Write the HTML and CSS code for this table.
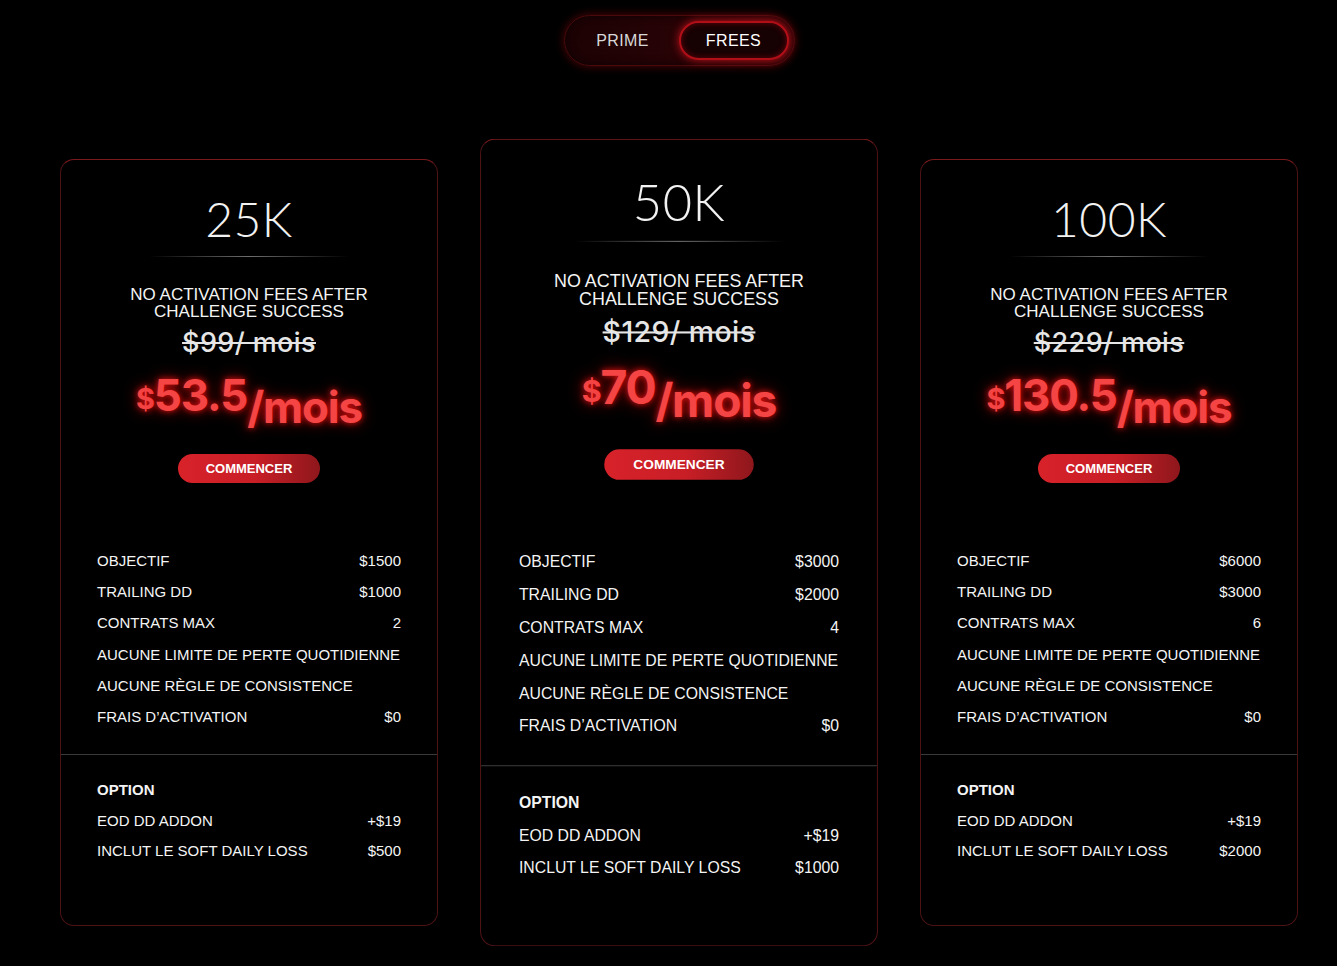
FILE: index.html
```html
<!DOCTYPE html>
<html lang="fr">
<head>
<meta charset="utf-8">
<title>Plans</title>
<link rel="stylesheet" href="styles.css">
</head>
<body>
<main class="page">
  <div class="toggle-wrap">
    <div class="toggle">
      <button class="tab">PRIME</button>
      <button class="tab active">FREES</button>
    </div>
  </div>

  <section class="cards">
    <article class="card">
      <div class="head">
        <h2 class="size">25K</h2>
        <div class="rule"></div>
        <p class="subtitle">NO ACTIVATION FEES AFTER<br>CHALLENGE SUCCESS</p>
        <p class="old">$99/ mois</p>
        <p class="price"><span class="cur">$</span><span class="amt">53.5</span><span class="per">/mois</span></p>
        <button class="cta">COMMENCER</button>
      </div>
      <ul class="features">
        <li><span>OBJECTIF</span><span>$1500</span></li>
        <li><span>TRAILING DD</span><span>$1000</span></li>
        <li><span>CONTRATS MAX</span><span>2</span></li>
        <li><span>AUCUNE LIMITE DE PERTE QUOTIDIENNE</span></li>
        <li><span>AUCUNE RÈGLE DE CONSISTENCE</span></li>
        <li><span>FRAIS D’ACTIVATION</span><span>$0</span></li>
      </ul>
      <ul class="options">
        <li class="opt-title">OPTION</li>
        <li><span>EOD DD ADDON</span><span>+$19</span></li>
        <li><span>INCLUT LE SOFT DAILY LOSS</span><span>$500</span></li>
      </ul>
    </article>

    <article class="card featured">
      <div class="head">
        <h2 class="size">50K</h2>
        <div class="rule"></div>
        <p class="subtitle">NO ACTIVATION FEES AFTER<br>CHALLENGE SUCCESS</p>
        <p class="old">$129/ mois</p>
        <p class="price"><span class="cur">$</span><span class="amt">70</span><span class="per">/mois</span></p>
        <button class="cta">COMMENCER</button>
      </div>
      <ul class="features">
        <li><span>OBJECTIF</span><span>$3000</span></li>
        <li><span>TRAILING DD</span><span>$2000</span></li>
        <li><span>CONTRATS MAX</span><span>4</span></li>
        <li><span>AUCUNE LIMITE DE PERTE QUOTIDIENNE</span></li>
        <li><span>AUCUNE RÈGLE DE CONSISTENCE</span></li>
        <li><span>FRAIS D’ACTIVATION</span><span>$0</span></li>
      </ul>
      <ul class="options">
        <li class="opt-title">OPTION</li>
        <li><span>EOD DD ADDON</span><span>+$19</span></li>
        <li><span>INCLUT LE SOFT DAILY LOSS</span><span>$1000</span></li>
      </ul>
    </article>

    <article class="card">
      <div class="head">
        <h2 class="size">100K</h2>
        <div class="rule"></div>
        <p class="subtitle">NO ACTIVATION FEES AFTER<br>CHALLENGE SUCCESS</p>
        <p class="old">$229/ mois</p>
        <p class="price"><span class="cur">$</span><span class="amt">130.5</span><span class="per">/mois</span></p>
        <button class="cta">COMMENCER</button>
      </div>
      <ul class="features">
        <li><span>OBJECTIF</span><span>$6000</span></li>
        <li><span>TRAILING DD</span><span>$3000</span></li>
        <li><span>CONTRATS MAX</span><span>6</span></li>
        <li><span>AUCUNE LIMITE DE PERTE QUOTIDIENNE</span></li>
        <li><span>AUCUNE RÈGLE DE CONSISTENCE</span></li>
        <li><span>FRAIS D’ACTIVATION</span><span>$0</span></li>
      </ul>
      <ul class="options">
        <li class="opt-title">OPTION</li>
        <li><span>EOD DD ADDON</span><span>+$19</span></li>
        <li><span>INCLUT LE SOFT DAILY LOSS</span><span>$2000</span></li>
      </ul>
    </article>
  </section>
</main>
</body>
</html>
```

FILE: styles.css
```css
* { box-sizing: border-box; }

html, body {
  margin: 0;
  background: #000;
  color: #fff;
  font-family: "Liberation Sans", Arial, sans-serif;
}

.page {
  padding: 15px 39px 0 60px;
  min-height: 966px;
}

.toggle-wrap {
  display: flex;
  justify-content: center;
}

.toggle {
  display: flex;
  gap: 3px;
  padding: 5px;
  width: 231px;
  height: 51px;
  border-radius: 26px;
  background: linear-gradient(90deg, #1c0204 0%, #2a0306 60%, #3a0508 100%);
  border: 1px solid #4a0a0c;
  box-shadow: 0 0 10px rgba(190, 10, 20, 0.45), inset 0 0 8px rgba(0, 0, 0, 0.6);
}

.tab {
  flex: 1;
  border: 0;
  border-radius: 21px;
  background: transparent;
  color: #d8d8d8;
  font-family: "Liberation Sans", Arial, sans-serif;
  font-size: 16px;
  letter-spacing: 0.4px;
  padding: 0;
}

.tab.active {
  color: #fff;
  background: #160103;
  border: 2px solid #b00f18;
  box-shadow: 0 0 10px rgba(230, 20, 30, 0.8), inset 0 0 6px rgba(200, 10, 20, 0.45);
}

.cards {
  display: flex;
  gap: 52px;
  margin-top: 93px;
}

.card {
  width: 378px;
  height: 767px;
  border-radius: 14px;
  border: 1px solid #4c1214;
  border-top-color: #7a1a1c;
  background: #000;
  display: flex;
  flex-direction: column;
}

.card.featured {
  transform: scale(1.0529);
}

.head {
  display: flex;
  flex-direction: column;
  align-items: center;
  padding-top: 33px;
}

.size {
  margin: 0;
  font-family: "Lato", sans-serif;
  font-weight: 300;
  font-size: 48px;
  line-height: 52px;
  letter-spacing: 0.5px;
  color: #f2f2f2;
}

.rule {
  width: 200px;
  height: 1px;
  margin-top: 11px;
  background: linear-gradient(90deg, rgba(255,255,255,0) 0%, rgba(200,200,200,0.55) 50%, rgba(255,255,255,0) 100%);
}

.subtitle {
  margin: 29px 0 0;
  font-size: 17px;
  line-height: 17px;
  text-align: center;
  color: #f4f4f4;
}

.old {
  margin: 8px 0 0;
  font-family: "Inter", sans-serif;
  font-weight: 500;
  font-size: 27px;
  line-height: 30px;
  letter-spacing: 0.4px;
  color: #e6e6e6;
  text-decoration: line-through;
  text-decoration-thickness: 2px;
}

.price {
  margin: 9px 0 0;
  font-family: "Inter", sans-serif;
  font-weight: 700;
  color: #f44444;
  line-height: 56px;
  height: 56px;
  letter-spacing: -1.2px;
  text-shadow: 0 0 6px rgba(255, 20, 20, 0.9), 0 0 16px rgba(255, 0, 0, 0.55);
}

.cur {
  font-size: 29px;
  vertical-align: 2px;
}

.amt {
  font-size: 44px;
}

.per {
  font-size: 44px;
  position: relative;
  top: 12px;
}

.cta {
  margin-top: 31px;
  width: 142px;
  height: 29px;
  border: 0;
  border-radius: 15px;
  background: linear-gradient(90deg, #d8222a 0%, #c81e26 55%, #8e171c 100%);
  color: #fff;
  font-family: "Liberation Sans", Arial, sans-serif;
  font-weight: 700;
  font-size: 13px;
  padding: 0;
}

.features,
.options {
  list-style: none;
  margin: 0;
  padding: 0 36px;
}

.features {
  margin-top: 62px;
  padding-bottom: 22px;
  border-bottom: 1px solid #3a3a3a;
}

.features li,
.options li {
  display: flex;
  justify-content: space-between;
  font-size: 15px;
  line-height: 31.2px;
  color: #f4f4f4;
  white-space: nowrap;
}

.options {
  padding-top: 20px;
}

.options li {
  line-height: 30.5px;
}

.options .opt-title {
  font-weight: 700;
}
```
